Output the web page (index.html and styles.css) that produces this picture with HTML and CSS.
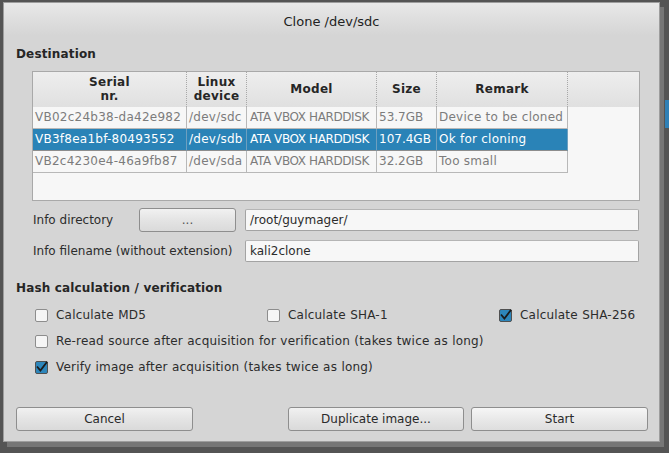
FILE: index.html
```html
<!DOCTYPE html>
<html>
<head>
<meta charset="utf-8">
<link rel="stylesheet" href="styles.css">
</head>
<body>
<div class="desk-thumb"></div>
<div class="window">
  <div class="titlebar">Clone /dev/sdc</div>
  <div class="content">
    <div class="heading">Destination</div>
    <div class="tableview">
      <div class="trow thead">
        <div class="th">Serial<br>nr.</div>
        <div class="th">Linux<br>device</div>
        <div class="th">Model</div>
        <div class="th">Size</div>
        <div class="th">Remark</div>
      </div>
      <div class="trow">
        <div class="td">VB02c24b38-da42e982</div>
        <div class="td">/dev/sdc</div>
        <div class="td model">ATA VBOX HARDDISK</div>
        <div class="td size">53.7GB</div>
        <div class="td">Device to be cloned</div>
      </div>
      <div class="trow sel">
        <div class="td">VB3f8ea1bf-80493552</div>
        <div class="td">/dev/sdb</div>
        <div class="td model">ATA VBOX HARDDISK</div>
        <div class="td size">107.4GB</div>
        <div class="td">Ok for cloning</div>
      </div>
      <div class="trow">
        <div class="td">VB2c4230e4-46a9fb87</div>
        <div class="td">/dev/sda</div>
        <div class="td model">ATA VBOX HARDDISK</div>
        <div class="td size">32.2GB</div>
        <div class="td">Too small</div>
      </div>
    </div>

    <div class="info">
      <div class="label">Info directory</div>
      <div class="btn small">...</div>
      <div class="field">/root/guymager/</div>
      <div class="label wide">Info filename (without extension)</div>
      <div class="field">kali2clone</div>
    </div>

    <div class="heading hash">Hash calculation / verification</div>
    <div class="checks">
      <div class="check"><span class="box"></span>Calculate MD5</div>
      <div class="check"><span class="box"></span>Calculate SHA-1</div>
      <div class="check"><svg class="cbox" width="13" height="13" viewBox="0 0 13 13"><rect x="0.5" y="0.5" width="12" height="12" rx="1.5" fill="#2d86bb" stroke="#505050"/><path d="M2.6 6.2 L5.4 9.6 L11.6 1.4" fill="none" stroke="#1b1b1b" stroke-width="1.8" stroke-linecap="square"/></svg>Calculate SHA-256</div>
      <div class="check full"><span class="box"></span>Re-read source after acquisition for verification (takes twice as long)</div>
      <div class="check full"><svg class="cbox" width="13" height="13" viewBox="0 0 13 13"><rect x="0.5" y="0.5" width="12" height="12" rx="1.5" fill="#2d86bb" stroke="#505050"/><path d="M2.6 6.2 L5.4 9.6 L11.6 1.4" fill="none" stroke="#1b1b1b" stroke-width="1.8" stroke-linecap="square"/></svg>Verify image after acquisition (takes twice as long)</div>
    </div>

    <div class="buttons">
      <div class="btn cancel">Cancel</div>
      <div class="btn dup">Duplicate image...</div>
      <div class="btn start">Start</div>
    </div>
  </div>
</div>
</body>
</html>
```
FILE: styles.css
```css
html, body {
  margin: 0;
  padding: 0;
}
body {
  width: 669px;
  height: 453px;
  overflow: hidden;
  position: relative;
  background: #545454;
  font-family: "DejaVu Sans", sans-serif;
  font-size: 12px;
  color: #2c2c2c;
}
.desk-thumb {
  position: absolute;
  right: 0;
  top: 100px;
  width: 4px;
  height: 28px;
  background: #2f80b6;
}
.window {
  margin: 2px 0 0 3px;
  width: 657px;
  height: 440px;
  box-sizing: border-box;
  border: 1px solid #9d9d9d;
  background: #d5d5d5;
  box-shadow: 4px 5px 0 #767676;
  display: flex;
  flex-direction: column;
}
.titlebar {
  height: 33px;
  padding-top: 4px;
  box-sizing: border-box;
  display: flex;
  align-items: center;
  justify-content: center;
  background: linear-gradient(#e8e8e8, #dcdcdc 60%, #d5d5d5);
  color: #222;
  font-size: 13px;
}
.content {
  flex: 1;
  display: flex;
  flex-direction: column;
  padding: 0 11px 0 12px;
}
.heading {
  font-weight: bold;
  line-height: 14px;
  margin-top: 11px;
  color: #262626;
  letter-spacing: 0.15px;
}
.tableview {
  margin: 10px 0 0 16px;
  width: 608px;
  height: 130px;
  box-sizing: border-box;
  border: 1px solid #a9a9a9;
  background: linear-gradient(#eeeeee, #e0e0e0) top / 100% 35px no-repeat, #f7f7f7;
}
.trow {
  display: grid;
  grid-template-columns: 154px 60px 130px 60px 131px;
  height: 22px;
}
.thead {
  height: 35px;
}
.th {
  box-sizing: border-box;
  border-right: 1px dotted #a8a8a8;
  font-weight: bold;
  text-align: center;
  display: flex;
  align-items: center;
  justify-content: center;
  line-height: 13.5px;
  color: #262626;
  letter-spacing: 0.3px;
}
.td {
  box-sizing: border-box;
  border-right: 1px solid #b8b8b8;
  border-bottom: 1px solid #b8b8b8;
  padding-left: 2px;
  line-height: 21px;
  color: #7c7c7c;
  letter-spacing: 0.25px;
  white-space: nowrap;
  overflow: hidden;
}
.td.model {
  letter-spacing: -0.4px;
  padding-left: 3px;
}
.td.size {
  letter-spacing: 0;
}
.sel .td {
  background: #2a83b7;
  color: #ffffff;
  border-right-color: #6d9fbf;
  border-bottom-color: #8d8d8d;
}
.info {
  display: grid;
  grid-template-columns: 106px 106px 394px;
  grid-template-rows: 24px 22px;
  row-gap: 8px;
  margin: 7px 0 0 17px;
  align-items: center;
}
.label {
  color: #2c2c2c;
}
.label.wide {
  grid-column: 1 / 3;
}
.field {
  height: 22px;
  box-sizing: border-box;
  border: 1px solid #a3a3a3;
  border-top-color: #b5b5b5;
  border-radius: 2px;
  background: #f7f7f7;
  padding-left: 4px;
  line-height: 20px;
  color: #2c2c2c;
}
.btn {
  height: 24px;
  box-sizing: border-box;
  border: 1px solid #8e8e8e;
  border-radius: 3px;
  background: linear-gradient(#f1f1f1, #e4e4e4 50%, #dadada);
  display: flex;
  align-items: center;
  justify-content: center;
  color: #2a2a2a;
}
.btn.small {
  width: 97px;
  color: #555;
}
.hash {
  margin-top: 19px;
}
.checks {
  display: grid;
  grid-template-columns: 232px 232px auto;
  grid-auto-rows: 26px;
  margin: 7px 0 0 19px;
}
.check {
  display: flex;
  align-items: center;
  gap: 8px;
  color: #2c2c2c;
  white-space: nowrap;
  letter-spacing: 0.2px;
  word-spacing: 0.3px;
}
.check.full {
  grid-column: 1 / 4;
}
.box {
  width: 13px;
  height: 13px;
  box-sizing: border-box;
  border: 1px solid #8d8d8d;
  border-radius: 2px;
  background: #f5f5f5;
  flex: none;
}
.cbox {
  flex: none;
  display: block;
}
.buttons {
  margin-top: auto;
  margin-bottom: 10px;
  display: flex;
  gap: 6px;
}
.cancel {
  width: 177px;
}
.dup {
  width: 176px;
  margin-left: auto;
}
.start {
  width: 177px;
  margin-left: 1px;
  background: linear-gradient(#f6f6f6, #e9e9e9 50%, #dedede);
}
```
